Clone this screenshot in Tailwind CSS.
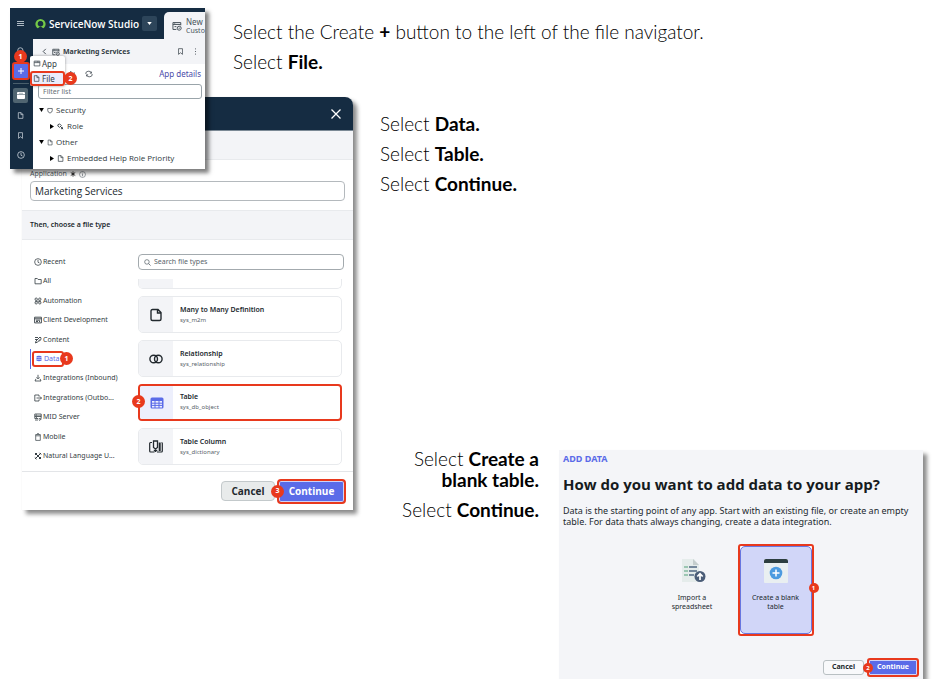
<!DOCTYPE html>
<html lang="en">
<head>
<meta charset="utf-8">
<meta name="viewport" content="width=device-width, initial-scale=1">
<title>Create a table in ServiceNow Studio</title>
<script src="https://cdn.jsdelivr.net/npm/@tailwindcss/browser@4"></script>
</head>
<body class="bg-white font-['Noto_Sans','Open_Sans',sans-serif] text-[#2b3338]">
<svg class="hidden" aria-hidden="true">
  <defs>
    <symbol id="file" viewBox="0 0 16 16"><path d="M3 1.5h6.5L13.500 5.500v9H3zM9 1.500v4.500h4.500" fill="none" stroke="currentColor" stroke-width="1.600" stroke-linejoin="round"/></symbol>
    <symbol id="window" viewBox="0 0 16 16"><path d="M1.500 2.500h13v11h-13zM1.500 6h13M4 4.200h1M7 4.200h5" fill="none" stroke="currentColor" stroke-width="1.600" stroke-linejoin="round"/></symbol>
    <symbol id="app" viewBox="0 0 16 16"><path d="M14 7V2.500H1.500v11H7M1.500 5.500H14M4 9h3M4 4h1" fill="none" stroke="currentColor" stroke-width="1.600"/><circle cx="11.500" cy="11.500" r="3.200" fill="none" stroke="currentColor" stroke-width="1.600"/><circle cx="11.500" cy="11.500" r="1" fill="currentColor"/></symbol>
    <symbol id="bookmark" viewBox="0 0 16 16"><path d="M3.500 1.500h9v13L8 10.800l-4.500 3.700z" fill="none" stroke="currentColor" stroke-width="1.600" stroke-linejoin="round"/></symbol>
    <symbol id="clock" viewBox="0 0 16 16"><circle cx="8" cy="8" r="6.700" fill="none" stroke="currentColor" stroke-width="1.500"/><path d="M8 3.800V8.500l3 1.500" fill="none" stroke="currentColor" stroke-width="1.500"/></symbol>
    <symbol id="search" viewBox="0 0 16 16"><circle cx="6.700" cy="6.700" r="5.200" fill="none" stroke="currentColor" stroke-width="1.500"/><path d="M10.500 10.500l4.500 4.500" stroke="currentColor" stroke-width="1.700"/></symbol>
  </defs>
</svg>

<main class="relative">
  <!-- Studio window, lying over the corner of the dialog -->
  <section aria-label="ServiceNow Studio" class="absolute left-[10px] top-[8px] z-10 flex h-[161px] w-[195px] bg-white text-[7px] leading-[10px] shadow-[4px_4px_4px_rgba(0,0,0,0.5)]">
    <nav aria-label="Studio tools" class="flex w-[23px] shrink-0 flex-col items-center bg-[#152c42] pr-[2px] text-[#d5dde4]">
      <button aria-label="Menu" class="mt-[12px] h-[7px] w-[7px]"><svg viewBox="0 0 7 7" class="h-[7px] w-[7px]"><path d="M0 1.500h7M0 3.500h7M0 5.500h7" stroke="currentColor" stroke-width=".8"/></svg></button>
      <button aria-label="Search" class="mt-[20px] h-[8px] w-[8px]"><svg class="h-[8px] w-[8px]"><use href="#search"/></svg></button>
      <button aria-label="Create" class="relative mt-[7px] flex h-[18px] w-[18px] items-center justify-center rounded-[3px] border-2 border-[#e8391d] bg-[#5a6be8] text-white">
        <svg viewBox="0 0 8 8" class="h-[8px] w-[8px]"><path d="M4 1v6M1 4h6" stroke="currentColor"/></svg>
      </button>
      <div class="mt-[3px] h-px w-[16px] bg-[#4a5f6c]"></div>
      <button aria-label="Apps" class="mt-[4px] flex h-[15px] w-[15px] items-center justify-center rounded-[2px] bg-[#506571]"><svg viewBox="0 0 8 7" class="h-[7px] w-[8px]"><rect width="8" height="7" rx="1" fill="#fff"/><path d="M0 2.500h8" stroke="#506571" stroke-width=".6"/><path d="M2 1.300h4" stroke="#8b99a2" stroke-width=".7"/></svg></button>
      <button aria-label="Files" class="mt-[9px] h-[7px] w-[7px]"><svg class="h-[7px] w-[7px]"><use href="#file"/></svg></button>
      <button aria-label="Bookmarks" class="mt-[13px] h-[7px] w-[7px]"><svg class="h-[7px] w-[7px]"><use href="#bookmark"/></svg></button>
      <button aria-label="History" class="mt-[12px] h-[8px] w-[8px]"><svg class="h-[8px] w-[8px]"><use href="#clock"/></svg></button>
    </nav>
    <div class="flex min-w-0 flex-1 flex-col">
      <header class="flex h-[31px] bg-[#152c42] text-white">
        <div class="flex min-w-0 flex-1 items-center gap-[3px] pl-[2px]">
          <svg viewBox="0 0 12 12" class="h-[11px] w-[11px] shrink-0"><path d="M3 9.700A4.300 4.300 0 1 1 9 9.700L7.500 8.500q-1.500-1-3 0z" fill="none" stroke="#75c947" stroke-width="2.600" stroke-linejoin="round"/><circle cx="6" cy="6.300" r="2.900" fill="#152c42"/></svg>
          <h1 class="whitespace-nowrap font-['Open_Sans',sans-serif] text-[10px] leading-[14px] font-semibold">ServiceNow Studio</h1>
          <button aria-label="Switch product" class="ml-auto flex h-[15px] w-[15px] shrink-0 items-center justify-center rounded-[2px] bg-[#2d455a]"><svg viewBox="0 0 6 4" class="h-[3px] w-[5px]"><path d="M0 0h6L3 4z" fill="#fff"/></svg></button>
        </div>
        <a href="#" class="mt-[4px] ml-[11px] flex w-[41px] shrink-0 items-center gap-[4px] overflow-hidden rounded-tl-[5px] bg-[#f3f4f7] pl-[8px] text-[#49545c]">
          <svg class="h-[10px] w-[10px] shrink-0"><use href="#app"/></svg>
          <span class="text-[7px] leading-[9px]"><span class="block text-[8px] leading-[9px]">New</span>Custo</span>
        </a>
      </header>
      <div class="flex h-[25px] items-center bg-[#f3f4f7] pl-[9px] pr-[8px] text-[#333d45]">
        <button aria-label="Back"><svg viewBox="0 0 5 8" class="h-[7px] w-[5px]"><path d="M4 1L1 4l3 3" fill="none" stroke="currentColor"/></svg></button>
        <svg class="ml-[5px] h-[8px] w-[8px]"><use href="#app"/></svg>
        <h2 class="ml-[3px] flex-1 whitespace-nowrap text-[7px] font-bold">Marketing Services</h2>
        <button aria-label="Bookmark app"><svg class="h-[7px] w-[7px]"><use href="#bookmark"/></svg></button>
        <button aria-label="More" class="ml-[10px]"><svg viewBox="0 0 3 8" class="h-[7px] w-[3px]"><path d="M1 1h1M1 4h1M1 7h1" stroke="currentColor"/></svg></button>
      </div>
      <div class="flex h-[20px] items-center pl-[36px] pr-[4px] text-[#333d45]">
        <button aria-label="Collapse"><svg viewBox="0 0 8 8" class="h-[8px] w-[7px]"><path d="M2 1v5M6 2v5M0 3l2-2 2 2M4 5l2 2 2-2" fill="none" stroke="currentColor" stroke-width=".8"/></svg></button>
        <button aria-label="Refresh" class="ml-[9px]"><svg viewBox="0 0 10 8" class="h-[8px] w-[8px]"><path d="M1 4a3.500 3 0 0 1 7-1M9 4a3.500 3 0 0 1-7 1M8 1v2H6M2 7V5h2" fill="none" stroke="currentColor" stroke-width=".9"/></svg></button>
        <a href="#" class="ml-auto text-[8px] text-[#4a4aa8]">App details</a>
      </div>
      <input type="text" aria-label="Filter list" placeholder="Filter list" class="ml-[5px] mr-[3px] h-[15px] rounded-[3px] border border-[#9aa4aa] bg-white px-[4px] text-[7px] placeholder:text-[#667078]">
      <ul class="mt-[3px] grid auto-rows-[16px] whitespace-nowrap font-['Open_Sans',sans-serif] text-[8px] text-[#2f3940]">
        <li class="flex items-center gap-[3px] pl-[6px]"><svg viewBox="0 0 6 5" class="h-[4px] w-[5px]"><path d="M0 0h6L3 5z"/></svg><svg viewBox="0 0 8 8" class="h-[7px] w-[6px]"><path d="M1 1.300h6V4Q7 6.500 4 7.400 1 6.500 1 4z" fill="none" stroke="currentColor" stroke-width=".9"/></svg>Security</li>
        <li class="flex items-center gap-[3px] pl-[17px]"><svg viewBox="0 0 5 6" class="h-[5px] w-[4px]"><path d="M0 0v6l5-3z"/></svg><svg viewBox="0 0 8 8" class="h-[7px] w-[7px]"><path d="M1 2l2-1 2 2-2 2-2-1.500zM4 4l3 3M4.500 6.500h2M6 4.500v2" fill="none" stroke="currentColor"/></svg>Role</li>
        <li class="flex items-center gap-[3px] pl-[6px]"><svg viewBox="0 0 6 5" class="h-[4px] w-[5px]"><path d="M0 0h6L3 5z"/></svg><svg class="h-[7px] w-[6px]"><use href="#file"/></svg>Other</li>
        <li class="flex items-center gap-[3px] pl-[17px]"><svg viewBox="0 0 5 6" class="h-[5px] w-[4px]"><path d="M0 0v6l5-3z"/></svg><svg class="h-[7px] w-[7px]"><use href="#file"/></svg>Embedded Help Role Priority</li>
      </ul>
    </div>
    <!-- Create menu -->
    <div role="menu" class="absolute left-[20px] top-[48px] w-[35px] rounded-[2px] bg-white text-[8px] leading-[10px] text-[#333d45] shadow-[0_0_3px_rgba(0,0,0,0.4)]">
      <button role="menuitem" class="flex h-[15px] items-center gap-[1px] pl-[3px]"><svg class="h-[7px] w-[8px]"><use href="#window"/></svg>App</button>
      <button role="menuitem" class="flex h-[15px] w-full items-center gap-[2px] rounded-[3px] border-2 border-[#e8391d] bg-[#ebecfb] pl-[1px]"><svg class="h-[7px] w-[7px]"><use href="#file"/></svg>File</button>
    </div>
    <span class="absolute left-[4px] top-[42px] flex h-[13px] w-[13px] items-center justify-center rounded-full bg-[#e8391d] text-[7px] font-bold text-white">1</span>
    <span class="absolute left-[54px] top-[64px] flex h-[13px] w-[13px] items-center justify-center rounded-full bg-[#e8391d] text-[7px] font-bold text-white">2</span>
  </section>

  <div class="flex h-[97px] flex-col gap-[6px] pl-[233px] pt-[20px] font-['Century_Gothic',Lato,sans-serif] text-[19px] leading-[24px] font-light text-black">
    <p>Select the Create <b class="font-bold">+</b> button to the left of the file navigator.</p>
    <p>Select <b class="font-bold">File.</b></p>
  </div>

  <div class="flex items-start pl-[22px]">
    <!-- Create file dialog -->
    <section aria-label="Create file" class="w-[331px] shrink-0 rounded-t-[8px] bg-white text-[7px] leading-[10px] shadow-[4px_4px_4px_rgba(0,0,0,0.45),0_0_1px_rgba(0,0,0,0.15)]">
      <header class="flex h-[34px] items-center justify-end rounded-t-[8px] border-b border-[#7b8995] bg-[#152c42] pr-[11px] text-white">
        <button aria-label="Close"><svg viewBox="0 0 12 12" class="h-[12px] w-[12px]"><path d="M1.500 1.500l9 9M10.500 1.500l-9 9" stroke="currentColor" stroke-width="1.300"/></svg></button>
      </header>
      <div class="h-[29px] border-b border-[#e8eaed] bg-[#f3f4f7]"></div>
      <div class="px-[8px] pt-[9px] pb-[9px]">
        <label for="application" class="flex items-center gap-[3px] text-[#515b62]">Application <svg viewBox="0 0 8 8" class="h-[6px] w-[6px] text-black"><path d="M4 .5v7M1 2l6 4M7 2L1 6" stroke="currentColor"/></svg><svg viewBox="0 0 8 8" class="h-[7px] w-[7px]"><circle cx="4" cy="4" r="3.400" fill="none" stroke="currentColor" stroke-width=".6"/><path d="M4 3.500V6M4 2v.8" stroke="currentColor" stroke-width=".7"/></svg></label>
        <input id="application" type="text" value="Marketing Services" class="mt-[2px] block h-[20px] w-full rounded-[4px] border border-[#b4b9bd] bg-white px-[4px] font-['Open_Sans',sans-serif] text-[10px] text-[#22292e]">
      </div>
      <h2 class="flex h-[30px] items-center border-y border-[#e8eaed] bg-[#f3f4f7] pl-[8px] text-[7px] font-semibold text-[#22292e]">Then, choose a file type</h2>
      <div class="flex h-[231px] pl-[8px]">
        <ul class="mt-[12px] grid h-[214px] w-[108px] shrink-0 auto-rows-fr whitespace-nowrap text-[#343d43]">
          <li class="flex items-center gap-[1px] pl-[4px]"><svg class="h-[8px] w-[8px]"><use href="#clock"/></svg><a href="#">Recent</a></li>
          <li class="flex items-center gap-[1px] pl-[4px]"><svg viewBox="0 0 8 8" class="h-[8px] w-[8px]"><path d="M1 6.800V1.500h2.300l.8 1H7.200v4.300z" fill="none" stroke="currentColor" stroke-width=".8"/></svg><a href="#">All</a></li>
          <li class="flex items-center gap-[1px] pl-[4px]"><svg viewBox="0 0 8 8" class="h-[8px] w-[8px]"><g fill="none" stroke="currentColor" stroke-width=".8"><circle cx="2.200" cy="2.200" r="1.200"/><circle cx="5.800" cy="2.200" r="1.200"/><circle cx="2.200" cy="5.800" r="1.200"/><circle cx="5.800" cy="5.800" r="1.200"/><path d="M1 4.200h6"/></g></svg><a href="#">Automation</a></li>
          <li class="flex items-center gap-[1px] pl-[4px]"><svg viewBox="0 0 8 8" class="h-[8px] w-[8px]"><path d="M.6 1.200h6.800v5.700H.6zM.6 2.800h6.800M2 4.200h4M2 5.500h2M5 5.500h1" fill="none" stroke="currentColor" stroke-width=".9"/></svg><a href="#">Client Development</a></li>
          <li class="flex items-center gap-[1px] pl-[4px]"><svg viewBox="0 0 8 8" class="h-[8px] w-[8px]"><path d="M1 1.500h3M1 3.500h2M1.500 7l.5-2L6 1l1.300 1.300L3.500 6zM5 5.500L7 3.500" fill="none" stroke="currentColor" stroke-width=".9"/></svg><a href="#">Content</a></li>
          <li class="relative flex items-center gap-[2px] border-l border-[#5a6be8] text-[#5a6be8]">
            <span class="ml-px flex h-[16px] w-[32px] items-center gap-[2px] rounded-[3px] border-2 border-[#e8391d] pl-[2px]"><svg viewBox="0 0 8 8" class="h-[7px] w-[6px] shrink-0"><ellipse cx="4" cy="1.500" rx="3.500" ry="1.300" fill="currentColor"/><path d="M.5 2.800q3.500 1.600 7 0v1.400q-3.500 1.600-7 0zM.5 5q3.500 1.600 7 0v1.500q-3.500 2.200-7 0z" fill="currentColor"/></svg><a href="#">Data</a></span>
            <span class="absolute left-[29px] top-[3px] flex h-[13px] w-[13px] items-center justify-center rounded-full bg-[#e8391d] text-[7px] font-bold text-white">1</span>
          </li>
          <li class="flex items-center gap-[1px] pl-[4px]"><svg viewBox="0 0 8 8" class="h-[8px] w-[8px]"><path d="M4 .8v4M2.500 3.300L4 4.800l1.500-1.500M2 4.800L1 7h6L6 4.800" fill="none" stroke="currentColor" stroke-width=".8"/></svg><a href="#">Integrations (Inbound)</a></li>
          <li class="flex items-center gap-[1px] pl-[4px]"><svg viewBox="0 0 8 8" class="h-[8px] w-[8px]"><path d="M5 2.500V1H.8v6H5V5.500M2.500 4h5M6 2.500L7.500 4 6 5.500" fill="none" stroke="currentColor" stroke-width=".8"/></svg><a href="#">Integrations (Outbo...</a></li>
          <li class="flex items-center gap-[1px] pl-[4px]"><svg viewBox="0 0 8 8" class="h-[8px] w-[8px]"><path d="M.8 1h6.400v2.200H.8zM4 5.500H.8V3.200h6.400v1.500M1 7h3M2 2h1M2 4.400h1M4.500 6l3-1M5 7.500L7.500 6" fill="none" stroke="currentColor" stroke-width=".8"/></svg><a href="#">MID Server</a></li>
          <li class="flex items-center gap-[1px] pl-[4px]"><svg viewBox="0 0 8 8" class="h-[8px] w-[8px]"><path d="M1.700 1.500h4.600v5.900H1.700zM1.700 2.800h4.600M3 .7h2" fill="none" stroke="currentColor" stroke-width=".7"/></svg><a href="#">Mobile</a></li>
          <li class="flex items-center gap-[1px] pl-[4px]"><svg viewBox="0 0 8 8" class="h-[8px] w-[8px]"><path d="M1 1l6 6M7 1L1 7M1 3l2-2M5 7l2-2M.8 5.500L2.500 7.200M5.500.8l1.700 1.700" fill="none" stroke="currentColor" stroke-width="1"/></svg><a href="#">Natural Language U...</a></li>
        </ul>
        <div class="min-w-0 flex-1 pt-[14px] pr-[9px]">
          <label class="flex h-[16px] items-center gap-[3px] rounded-[4px] border border-[#a3aaae] pl-[5px] text-[#49545c]">
            <svg class="h-[7px] w-[7px] shrink-0"><use href="#search"/></svg>
            <input type="search" aria-label="Search file types" placeholder="Search file types" class="min-w-0 flex-1 bg-transparent text-[7px] leading-[10px] outline-none placeholder:text-[#59646b]">
          </label>
          <div class="mt-[9px] mr-[2px] flex flex-col gap-[7px]">
            <div class="flex h-[10px] overflow-hidden rounded-b-[5px] border border-t-0 border-[#e8eaed]"><span class="w-[34px] bg-[#f3f4f7]"></span></div>
            <button class="flex h-[37px] overflow-hidden rounded-[5px] border border-[#e8eaed] text-left"><span class="flex h-full w-[34px] items-center justify-center bg-[#f3f4f7] text-[#22292e]"><svg viewBox="0 0 14 14" class="h-[14px] w-[14px]"><path d="M3.500 1.500H9l3 3V11q0 1.500-1.500 1.500h-7Q2 12.500 2 11V3q0-1.500 1.500-1.500zM8.500 1.500V5H12" fill="none" stroke="currentColor" stroke-width="1.400"/></svg></span><span class="pl-[7px] pt-[8px]"><b class="block font-semibold text-[#22292e]">Many to Many Definition</b><span class="block text-[6px] text-[#59646b]">sys_m2m</span></span></button>
            <button class="flex h-[37px] overflow-hidden rounded-[5px] border border-[#e8eaed] text-left"><span class="flex h-full w-[34px] items-center justify-center bg-[#f3f4f7] text-[#22292e]"><svg viewBox="0 0 14 14" class="h-[14px] w-[14px]"><g fill="none" stroke="currentColor" stroke-width="1.400"><circle cx="4.700" cy="7" r="3.800"/><circle cx="9.300" cy="7" r="3.800"/></g></svg></span><span class="pl-[7px] pt-[8px]"><b class="block font-semibold text-[#22292e]">Relationship</b><span class="block text-[6px] text-[#59646b]">sys_relationship</span></span></button>
            <div class="relative">
              <button class="flex h-[37px] w-full overflow-hidden rounded-[4px] border-2 border-[#e8391d] text-left"><span class="flex h-full w-[33px] items-center justify-center bg-[#edeffc] text-[#5a6be8]"><svg viewBox="0 0 14 12" class="h-[12px] w-[14px]"><rect x=".5" y=".5" width="13" height="11" rx="1.500" fill="currentColor"/><path d="M2 4h10v6.500H2z" fill="#edeffc"/><path d="M2 6.200h10M2 8.400h10M5 4v7M9 4v7" stroke="currentColor"/></svg></span><span class="pl-[7px] pt-[6px]"><b class="block font-semibold text-[#22292e]">Table</b><span class="block text-[6px] text-[#59646b]">sys_db_object</span></span></button>
              <span class="absolute left-[-6px] top-[11px] flex h-[13px] w-[13px] items-center justify-center rounded-full bg-[#e8391d] text-[7px] font-bold text-white">2</span>
            </div>
            <button class="flex h-[37px] overflow-hidden rounded-[5px] border border-[#e8eaed] text-left"><span class="flex h-full w-[34px] items-center justify-center bg-[#f3f4f7] text-[#22292e]"><svg viewBox="0 0 14 14" class="h-[14px] w-[14px]"><path d="M3 2.500H1.500Q.7 2.500.7 3.500v7.500q0 1 .8 1h4M8 12h4.500q.8 0 .8-1V3.500q0-1-.8-1" fill="none" stroke="currentColor" stroke-width="1.200"/><path d="M4.500 1h4v6.500l-2 1.500-2-1.500zM6.500 9v3M4.800 10.500h3.500" fill="none" stroke="currentColor" stroke-width="1.300"/><path d="M9.700 2.500h2v8.500h-2z" fill="currentColor"/></svg></span><span class="pl-[7px] pt-[8px]"><b class="block font-semibold text-[#22292e]">Table Column</b><span class="block text-[6px] text-[#59646b]">sys_dictionary</span></span></button>
          </div>
        </div>
      </div>
      <footer class="flex h-[39px] items-center justify-end gap-[2px] border-t border-[#e3e5e8] pr-[7px] font-['Open_Sans',sans-serif] text-[10px] font-bold">
        <button class="h-[20px] w-[54px] rounded-[4px] border border-[#c3c9cb] bg-[#e8ebeb] text-[#22292e]">Cancel</button>
        <div class="relative">
          <button class="h-[25px] w-[69px] rounded-[4px] border-2 border-[#e8391d] bg-[#5a6be8] text-white inset-ring inset-ring-white/70">Continue</button>
          <span class="absolute left-[-6px] top-[6px] flex h-[13px] w-[13px] items-center justify-center rounded-full bg-[#e8391d] text-[7px] text-white">3</span>
        </div>
      </footer>
    </section>

    <div class="flex min-w-0 flex-1 flex-col">
      <div class="flex flex-col gap-[6px] pl-[27px] pt-[15px] font-['Century_Gothic',Lato,sans-serif] text-[19px] leading-[24px] font-light text-black">
        <p>Select <b class="font-bold">Data.</b></p>
        <p>Select <b class="font-bold">Table.</b></p>
        <p>Select <b class="font-bold">Continue.</b></p>
      </div>
      <div class="mt-[252px] flex items-start gap-[20px] pr-[13px]">
        <div class="w-[186px] shrink-0 pl-[40px] text-right font-['Century_Gothic',Lato,sans-serif] text-[19px] leading-[21px] font-light text-black">
          <p>Select <b class="font-bold">Create a blank table.</b></p>
          <p class="mt-[9px]">Select <b class="font-bold">Continue.</b></p>
        </div>
        <!-- Add data card -->
        <section aria-label="Add data" class="mt-[2px] flex min-w-0 flex-1 flex-col bg-[#f4f5f8] text-[#22292e] shadow-[4px_4px_4px_rgba(0,0,0,0.45)]">
          <div class="px-[4px] pt-[3px]">
            <p class="text-[9px] leading-[12px] font-bold text-[#5a6be8]">ADD DATA</p>
            <h2 class="mt-[9px] font-['Open_Sans',sans-serif] text-[15px] leading-[20px] font-bold text-[#161b1d]">How do you want to add data to your app?</h2>
            <p class="mt-[11px] text-[9px] leading-[11px]">Data is the starting point of any app. Start with an existing file, or create an empty table. For data thats always changing, create a data integration.</p>
          </div>
          <div class="mt-[17px] flex justify-center gap-[8px] pr-[14px] text-[7px] leading-[9px]">
            <button class="flex h-[92px] w-[75px] flex-col items-center gap-[10px] pt-[15px]">
              <svg viewBox="0 0 26 24" class="ml-[4px] h-[24px] w-[26px]"><path d="M1 0h12l5 6v17H1z" fill="#e5eceb"/><path d="M12 0v6h6z" fill="#c4cdcd"/><path d="M3 8h4M3 12h4M3 16h4" stroke="#83b9a0" stroke-width="1.500"/><path d="M8 8h8M8 12h8M8 16h5" stroke="#506783" stroke-width="1.300"/><circle cx="19" cy="17.500" r="5.500" fill="#4b5d78"/><path d="M19 21v-6M16.300 17.500L19 14.700l2.700 2.800" fill="none" stroke="#fff" stroke-width="1.700"/></svg>
              <span>Import a<br>spreadsheet</span>
            </button>
            <div class="relative">
              <button class="h-[92px] w-[76px] rounded-[3px] border-2 border-[#e8391d] bg-white"><span class="flex h-full flex-col items-center gap-[10px] rounded-[5px] border border-[#6876e0] bg-[#d1d6f8] pt-[12px]">
                <svg viewBox="0 0 24 24" class="h-[24px] w-[24px]"><rect width="24" height="24" rx="1" fill="#e9eff1"/><path d="M0 4V2q0-2 2-2h20q2 0 2 2v2z" fill="#2d3e40"/><circle cx="12" cy="14" r="6.300" fill="#4c9be0"/><path d="M12 10.500v7M8.500 14h7" stroke="#fff" stroke-width="1.500"/></svg>
                <span>Create a blank<br>table</span></span>
              </button>
              <span class="absolute right-[-5px] top-[39px] flex h-[10px] w-[10px] items-center justify-center rounded-full bg-[#e8391d] text-[6px] font-bold text-white">1</span>
            </div>
          </div>
          <footer class="mt-[22px] flex items-center justify-end gap-[3px] pr-[4px] pb-[2px] text-[7px] font-bold">
            <button class="h-[15px] w-[41px] rounded-[3px] border border-[#b9c0c3] bg-white/40">Cancel</button>
            <div class="relative flex">
              <button class="h-[19px] w-[52px] rounded-[3px] border-2 border-[#e8391d] bg-[#5a6be8] text-white inset-ring inset-ring-white/70">Continue</button>
              <span class="absolute left-[-4px] top-[5px] flex h-[10px] w-[10px] items-center justify-center rounded-full bg-[#e8391d] text-[6px] text-white">2</span>
            </div>
          </footer>
        </section>
      </div>
    </div>
  </div>
</main>
</body>
</html>
